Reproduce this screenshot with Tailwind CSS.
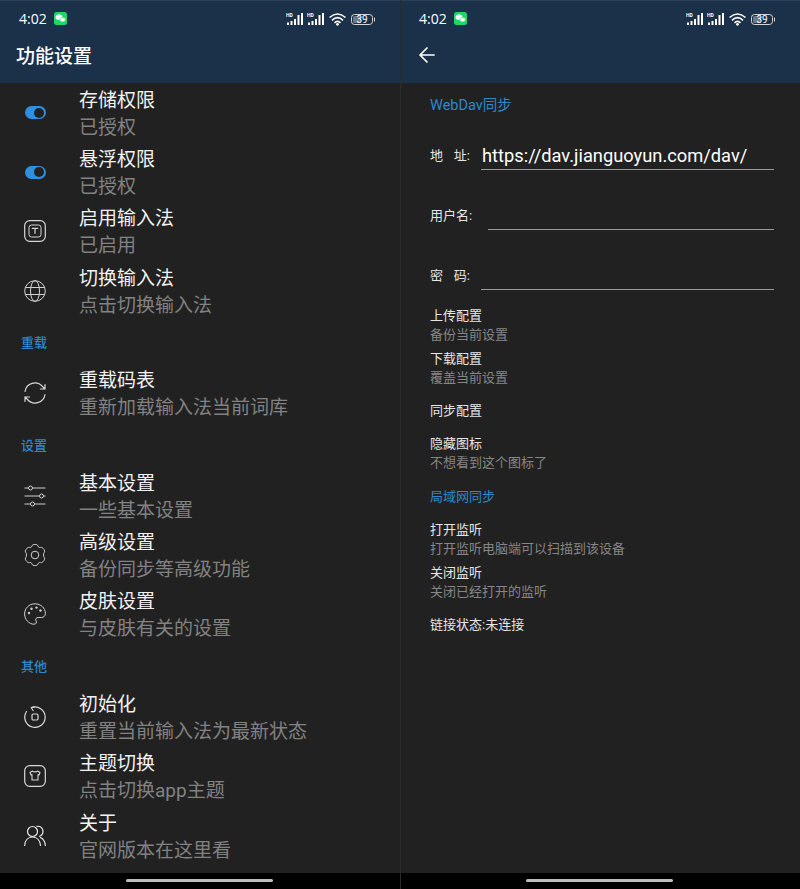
<!DOCTYPE html>
<html lang="zh-CN">
<head>
<meta charset="utf-8">
<title>功能设置</title>
<script src="https://cdn.jsdelivr.net/npm/@tailwindcss/browser@4"></script>
</head>
<body class="bg-[#212121] font-['Roboto','Noto_Sans_CJK_SC',sans-serif]">
<div class="flex w-[800px] h-[889px] overflow-hidden">

  <!-- LEFT PANEL -->
  <div class="w-[400px] h-full flex flex-col">
    <header class="h-[83px] shrink-0 bg-[#1b3049] border-t border-[#2b4058] text-white">
      <div class="h-[35px] flex items-center pl-[19px] pr-[25px]">
        <span class="text-[14px] leading-none font-['Open_Sans',sans-serif]">4:02</span>
        <svg class="ml-[7px]" width="13" height="13" viewBox="0 0 13 13"><rect width="13" height="13" rx="2.5" fill="#1fd66b"/><ellipse cx="5" cy="5.3" rx="3.4" ry="2.7" fill="#fff"/><ellipse cx="8.6" cy="7.6" rx="2.9" ry="2.3" fill="#fff" stroke="#1fd66b" stroke-width=".6"/></svg>
        <svg class="ml-auto" width="89" height="14" viewBox="0 0 89 14" fill="none">
          <g fill="#fff"><rect x="1" y="10.500" width="2" height="2.500"/><rect x="4.500" y="9" width="2" height="4"/><rect x="8" y="7" width="2" height="6"/><rect x="11.500" y="3" width="2" height="10"/><rect x="15" y="1" width="2" height="12"/>
          <rect x="22" y="10.500" width="2" height="2.500"/><rect x="25.500" y="9" width="2" height="4"/><rect x="29" y="7" width="2" height="6"/><rect x="32.500" y="3" width="2" height="10"/><rect x="36" y="1" width="2" height="12"/></g>
          <text x="0" y="4.500" font-size="5" font-weight="700" fill="#fff" font-family="Roboto">HD</text>
          <text x="21" y="4.500" font-size="5" font-weight="700" fill="#fff" font-family="Roboto">HD</text>
          <path d="M43.500 5.500Q51.500 -1.500 59.500 5.500M46 8.300Q51.500 3 57 8.300M48.500 10.800Q51.500 8 54.500 10.800" stroke="#fff" stroke-width="1.600"/><circle cx="51.500" cy="12.300" r="1.400" fill="#fff"/>
          <rect x="65.500" y="2.500" width="21" height="10" rx="3" stroke="#d5d5d5"/><path d="M88 5.500a1.500 1.500 0 0 1 0 4z" fill="#d5d5d5"/><rect x="67" y="4" width="8" height="7" rx="1.500" fill="#6d7886"/>
          <text x="70.500" y="11" font-size="10" fill="#fff" font-family="Roboto">39</text>
        </svg>
      </div>
      <div class="h-[41px] flex items-center pl-[16px] text-[19px] font-medium leading-none">功能设置</div>
    </header>

    <main class="flex-1 flex flex-col">
      <div class="h-[59.400px] flex items-center pl-[24px]">
        <div class="w-[22px] flex justify-center"><span class="w-[21px] h-[13px] rounded-full bg-[#2f8fe0] flex items-center justify-end pr-[1.500px]"><span class="w-[10px] h-[10px] rounded-full bg-[#212121]"></span></span></div>
        <div class="ml-[33px] mt-[2px] text-[19px] leading-[27px]"><div class="text-[#f2f2f2]">存储权限</div><div class="text-[#828282]">已授权</div></div>
      </div>
      <div class="h-[59.400px] flex items-center pl-[24px]">
        <div class="w-[22px] flex justify-center"><span class="w-[21px] h-[13px] rounded-full bg-[#2f8fe0] flex items-center justify-end pr-[1.500px]"><span class="w-[10px] h-[10px] rounded-full bg-[#212121]"></span></span></div>
        <div class="ml-[33px] mt-[2px] text-[19px] leading-[27px]"><div class="text-[#f2f2f2]">悬浮权限</div><div class="text-[#828282]">已授权</div></div>
      </div>
      <div class="h-[59.400px] flex items-center pl-[24px]">
        <svg class="w-[22px] h-[22px] shrink-0" viewBox="0 0 22 22" fill="none" stroke="#d8d8d8" stroke-width="1.200"><rect x=".7" y=".7" width="20.600" height="20.600" rx="5"/><rect x="5" y="5" width="12" height="12" rx="2.500" stroke-width="1"/><path d="M7.800 8.300h6.400M11 8.300v5.400" stroke-width="1.200"/></svg>
        <div class="ml-[33px] mt-[2px] text-[19px] leading-[27px]"><div class="text-[#f2f2f2]">启用输入法</div><div class="text-[#828282]">已启用</div></div>
      </div>
      <div class="h-[59.400px] flex items-center pl-[24px]">
        <svg class="w-[22px] h-[22px] shrink-0" viewBox="0 0 22 22" fill="none" stroke="#d0d0d0" stroke-width="1"><circle cx="11" cy="11" r="10.300"/><ellipse cx="11" cy="11" rx="4.500" ry="10.300"/><path d="M1.500 7.500h19M1.500 14.500h19"/></svg>
        <div class="ml-[33px] mt-[2px] text-[19px] leading-[27px]"><div class="text-[#f2f2f2]">切换输入法</div><div class="text-[#828282]">点击切换输入法</div></div>
      </div>

      <div class="h-[43px] flex items-center pl-[21px] pt-[2px] text-[13px] font-medium text-[#2d88cc]">重载</div>

      <div class="h-[59.400px] flex items-center pl-[24px]">
        <svg class="w-[22px] h-[22px] shrink-0" viewBox="0 0 22 22" fill="none" stroke="#d8d8d8" stroke-width="1.200" stroke-linecap="round"><path d="M1 9.500A10 10 0 0 1 18.500 4.500L21 7M21 2.500V7h-4.500"/><path d="M21 12.500A10 10 0 0 1 3.500 17.500L1 15M1 19.500V15h4.500"/></svg>
        <div class="ml-[33px] mt-[2px] text-[19px] leading-[27px]"><div class="text-[#f2f2f2]">重载码表</div><div class="text-[#828282]">重新加载输入法当前词库</div></div>
      </div>

      <div class="h-[43px] flex items-center pl-[21px] pt-[2px] text-[13px] font-medium text-[#2d88cc]">设置</div>

      <div class="h-[59.400px] flex items-center pl-[24px]">
        <svg class="w-[22px] h-[22px] shrink-0" viewBox="0 0 22 22" fill="none" stroke="#cfcfcf" stroke-width="1"><path d="M.5 3h4M8.500 3h13M.5 11h15M19.500 11h2M.5 19h6M10.500 19h11"/><circle cx="6.500" cy="3" r="2"/><circle cx="17.500" cy="11" r="2"/><circle cx="8.500" cy="19" r="2"/></svg>
        <div class="ml-[33px] mt-[2px] text-[19px] leading-[27px]"><div class="text-[#f2f2f2]">基本设置</div><div class="text-[#828282]">一些基本设置</div></div>
      </div>
      <div class="h-[59.400px] flex items-center pl-[24px]">
        <svg class="w-[22px] h-[22px] shrink-0" viewBox="0 0 22 22" fill="none" stroke="#cfcfcf" stroke-width="1" stroke-linejoin="round"><circle cx="11" cy="11" r="3.800"/><path d="M8 2C8.500-.2 13.500-.2 14 2c.3 1.200 1.500 1.800 2.600 1.400 2.200-.6 5.200 3.700 3.600 5.200-.9.900-.9 3.900 0 4.800 1.600 1.500-1.400 5.800-3.600 5.200-1.100-.4-2.300.2-2.600 1.400-.5 2.200-5.500 2.200-6 0-.3-1.200-1.500-1.800-2.600-1.400-2.200.6-5.200-3.700-3.600-5.200.9-.9.900-3.900 0-4.800C.2 7.100 3.200 2.800 5.400 3.400 6.500 3.800 7.700 3.200 8 2z"/></svg>
        <div class="ml-[33px] mt-[2px] text-[19px] leading-[27px]"><div class="text-[#f2f2f2]">高级设置</div><div class="text-[#828282]">备份同步等高级功能</div></div>
      </div>
      <div class="h-[59.400px] flex items-center pl-[24px]">
        <svg class="w-[22px] h-[22px] shrink-0" viewBox="0 0 22 22" fill="none" stroke="#d0d0d0" stroke-width="1"><path d="M11 .8C5 .8.600 5.300.600 11c0 5.600 4.400 10.200 9.400 10.200 2.400 0 2.800-1.700 2-3.300-.9-1.800.2-3.400 2.200-3.400h3.200c2.300 0 4-1.500 4-4C21.400 5 16.700.800 11 .800z"/><g fill="#d0d0d0" stroke="none"><circle cx="5" cy="10" r="1.200"/><circle cx="7.500" cy="5.800" r="1.200"/><circle cx="12.500" cy="4.600" r="1.200"/><circle cx="16.500" cy="7.500" r="1.200"/></g></svg>
        <div class="ml-[33px] mt-[2px] text-[19px] leading-[27px]"><div class="text-[#f2f2f2]">皮肤设置</div><div class="text-[#828282]">与皮肤有关的设置</div></div>
      </div>

      <div class="h-[43px] flex items-center pl-[21px] pt-[2px] text-[13px] font-medium text-[#2d88cc]">其他</div>

      <div class="h-[59.400px] flex items-center pl-[24px]">
        <svg class="w-[22px] h-[22px] shrink-0" viewBox="0 0 22 22" fill="none" stroke="#d8d8d8" stroke-width="1.200" stroke-linecap="round" stroke-linejoin="round"><path d="M7.500 1.600A10.200 10.200 0 1 1 2.500 5.500"/><path d="M7.300 1.700 10.500.8M7.300 1.700l1.800 2.800"/><rect x="8" y="8" width="6" height="6" rx="1.200"/></svg>
        <div class="ml-[33px] mt-[2px] text-[19px] leading-[27px]"><div class="text-[#f2f2f2]">初始化</div><div class="text-[#828282]">重置当前输入法为最新状态</div></div>
      </div>
      <div class="h-[59.400px] flex items-center pl-[24px]">
        <svg class="w-[22px] h-[22px] shrink-0" viewBox="0 0 22 22" fill="none" stroke="#d8d8d8" stroke-width="1.200" stroke-linejoin="round"><rect x=".7" y=".7" width="20.600" height="20.600" rx="5"/><path d="M8.500 6 6 7.500l1 2.500 1-.4V15h6V9.600l1 .4 1-2.500L13.500 6c-.5 1.200-4.500 1.200-5 0z" stroke-width="1.100"/></svg>
        <div class="ml-[33px] mt-[2px] text-[19px] leading-[27px]"><div class="text-[#f2f2f2]">主题切换</div><div class="text-[#828282]">点击切换app主题</div></div>
      </div>
      <div class="h-[59.400px] flex items-center pl-[24px]">
        <svg class="w-[22px] h-[22px] shrink-0" viewBox="0 0 22 22" fill="none" stroke="#e8e8e8" stroke-width="1.200" stroke-linecap="round"><circle cx="8.500" cy="6.500" r="5"/><path d="M.7 20.500c.3-5 3.300-8.500 7.800-8.500s7.500 3.500 8 8.500"/><path d="M13 1.300c3.800-.5 6 2.200 6 5 0 2.300-1.500 4.300-3.500 5M16.500 12.500c2.800 1.300 4.500 4.300 4.800 8"/></svg>
        <div class="ml-[33px] mt-[2px] text-[19px] leading-[27px]"><div class="text-[#f2f2f2]">关于</div><div class="text-[#828282]">官网版本在这里看</div></div>
      </div>
    </main>

    <footer class="h-[16px] shrink-0 bg-black flex justify-center pt-[6px] pr-[1px]"><span class="w-[147px] h-[3px] rounded-full bg-[#bdbdbd]"></span></footer>
  </div>

  <!-- RIGHT PANEL -->
  <div class="w-[400px] h-full flex flex-col border-l border-[#2c2c2c]">
    <header class="h-[83px] shrink-0 bg-[#1b3049] border-t border-[#2b4058] text-white">
      <div class="h-[35px] flex items-center pl-[18px] pr-[25px]">
        <span class="text-[14px] leading-none font-['Open_Sans',sans-serif]">4:02</span>
        <svg class="ml-[7px]" width="13" height="13" viewBox="0 0 13 13"><rect width="13" height="13" rx="2.5" fill="#1fd66b"/><ellipse cx="5" cy="5.3" rx="3.4" ry="2.7" fill="#fff"/><ellipse cx="8.6" cy="7.6" rx="2.9" ry="2.3" fill="#fff" stroke="#1fd66b" stroke-width=".6"/></svg>
        <svg class="ml-auto" width="89" height="14" viewBox="0 0 89 14" fill="none">
          <g fill="#fff"><rect x="1" y="10.500" width="2" height="2.500"/><rect x="4.500" y="9" width="2" height="4"/><rect x="8" y="7" width="2" height="6"/><rect x="11.500" y="3" width="2" height="10"/><rect x="15" y="1" width="2" height="12"/>
          <rect x="22" y="10.500" width="2" height="2.500"/><rect x="25.500" y="9" width="2" height="4"/><rect x="29" y="7" width="2" height="6"/><rect x="32.500" y="3" width="2" height="10"/><rect x="36" y="1" width="2" height="12"/></g>
          <text x="0" y="4.500" font-size="5" font-weight="700" fill="#fff" font-family="Roboto">HD</text>
          <text x="21" y="4.500" font-size="5" font-weight="700" fill="#fff" font-family="Roboto">HD</text>
          <path d="M43.500 5.500Q51.500 -1.500 59.500 5.500M46 8.300Q51.500 3 57 8.300M48.500 10.800Q51.500 8 54.500 10.800" stroke="#fff" stroke-width="1.600"/><circle cx="51.500" cy="12.300" r="1.400" fill="#fff"/>
          <rect x="65.500" y="2.500" width="21" height="10" rx="3" stroke="#d5d5d5"/><path d="M88 5.500a1.500 1.500 0 0 1 0 4z" fill="#d5d5d5"/><rect x="67" y="4" width="8" height="7" rx="1.500" fill="#6d7886"/>
          <text x="70.500" y="11" font-size="10" fill="#fff" font-family="Roboto">39</text>
        </svg>
      </div>
      <div class="h-[41px] flex items-center pl-[18px] pb-[3px]">
        <svg width="16" height="16" viewBox="0 0 16 16" fill="none" stroke="#fff" stroke-width="1.700" stroke-linecap="round" stroke-linejoin="round"><path d="M15 8H1.500M8 1 1 8l7 7"/></svg>
      </div>
    </header>

    <main class="flex-1 pl-[29px] pr-[26px] text-[13px] text-[#e6e6e6]">
      <div class="h-[37px] flex items-center pt-[9px] text-[14.500px] text-[#2d88cc]">WebDav同步</div>

      <div class="h-[60px] flex items-center pt-[12px]">
        <span class="w-[51px] shrink-0 flex justify-between pr-[11px]"><span>地</span><span>址:</span></span>
        <span class="flex-1 h-[28px] border-b border-[#9a9a9a] text-[18.300px] leading-[27px] pl-[1px] text-white">https://dav.jianguoyun.com/dav/</span>
      </div>
      <div class="h-[60px] flex items-center pt-[12px]">
        <span class="w-[58px] shrink-0">用户名:</span>
        <span class="flex-1 h-[28px] border-b border-[#9a9a9a]"></span>
      </div>
      <div class="h-[59px] flex items-center pt-[12px]">
        <span class="w-[51px] shrink-0 flex justify-between pr-[11px]"><span>密</span><span>码:</span></span>
        <span class="flex-1 h-[28px] border-b border-[#9a9a9a]"></span>
      </div>

      <div class="h-[43px] pt-[7px] leading-[19px]"><div>上传配置</div><div class="text-[#868686]">备份当前设置</div></div>
      <div class="h-[43px] pt-[7px] leading-[19px]"><div>下载配置</div><div class="text-[#868686]">覆盖当前设置</div></div>
      <div class="h-[44px] flex items-center pt-[8px]">同步配置</div>
      <div class="h-[48px] pt-[4.500px] leading-[19px]"><div>隐藏图标</div><div class="text-[#868686]">不想看到这个图标了</div></div>
      <div class="h-[38px] flex items-center pt-[2px] text-[#2d88cc]">局域网同步</div>
      <div class="h-[43px] pt-[5px] leading-[19px]"><div>打开监听</div><div class="text-[#868686]">打开监听电脑端可以扫描到该设备</div></div>
      <div class="h-[43px] pt-[5px] leading-[19px]"><div>关闭监听</div><div class="text-[#868686]">关闭已经打开的监听</div></div>
      <div class="h-[48px] flex items-center">链接状态:未连接</div>
    </main>

    <footer class="h-[16px] shrink-0 bg-black flex justify-center pt-[6px] pr-[2px]"><span class="w-[147px] h-[3px] rounded-full bg-[#bdbdbd]"></span></footer>
  </div>
</div>
</body>
</html>
